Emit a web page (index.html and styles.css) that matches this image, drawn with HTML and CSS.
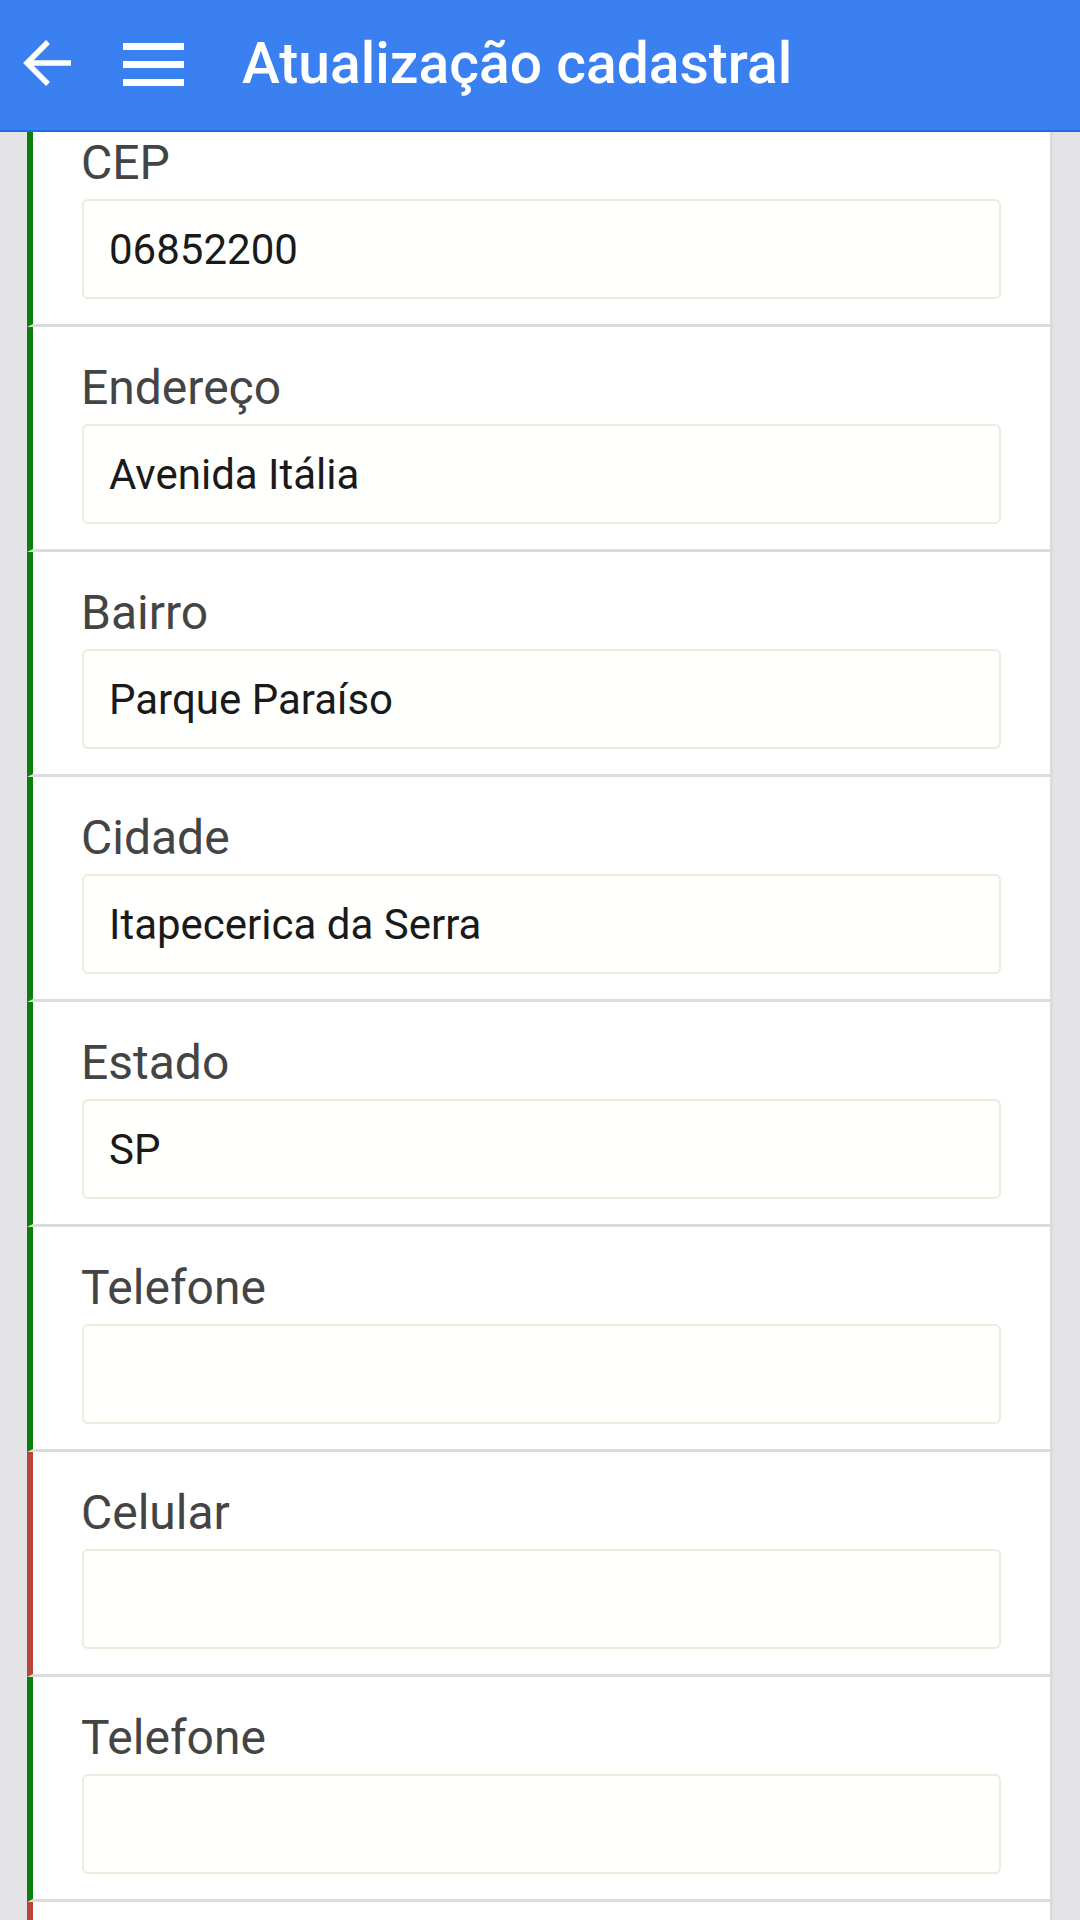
FILE: index.html
```html
<!DOCTYPE html>
<html>
    <head>
        <meta charset="UTF-8">
        <meta name="viewport" content="width=device-width, initial-scale=1.0"/>
        <title>Atualização cadastral</title>
        <link rel="stylesheet" href="styles.css">
    </head>
    <body>
        <header class="toolbar">
            <svg class="icon-back" width="50" height="50" viewBox="0 0 50 50">
                <path d="M48 24H4M25 3L4 24l21 21" fill="none" stroke="#fff" stroke-width="5.5"/>
            </svg>
            <svg class="icon-menu" width="61" height="43" viewBox="0 0 61 43">
                <rect x="0" y="0" width="61" height="7" fill="#fff"/>
                <rect x="0" y="18" width="61" height="7" fill="#fff"/>
                <rect x="0" y="36" width="61" height="7" fill="#fff"/>
            </svg>
            <h1 class="toolbar-title">Atualização cadastral</h1>
        </header>

        <form class="form-list">
            <div class="field ok">
                <label for="cep">CEP</label>
                <input id="cep" type="text" value="06852200">
            </div>
            <div class="field ok">
                <label for="endereco">Endereço</label>
                <input id="endereco" type="text" value="Avenida Itália">
            </div>
            <div class="field ok">
                <label for="bairro">Bairro</label>
                <input id="bairro" type="text" value="Parque Paraíso">
            </div>
            <div class="field ok">
                <label for="cidade">Cidade</label>
                <input id="cidade" type="text" value="Itapecerica da Serra">
            </div>
            <div class="field ok">
                <label for="estado">Estado</label>
                <input id="estado" type="text" value="SP">
            </div>
            <div class="field ok">
                <label for="telefone">Telefone</label>
                <input id="telefone" type="text" value="">
            </div>
            <div class="field error">
                <label for="celular">Celular</label>
                <input id="celular" type="text" value="">
            </div>
            <div class="field ok">
                <label for="telefone2">Telefone</label>
                <input id="telefone2" type="text" value="">
            </div>
            <!-- proxima linha, so aparece a borda -->
            <div class="field error">
                <input type="text" value="">
            </div>
        </form>
    </body>
</html>
```

FILE: styles.css
```css
*
{
    box-sizing: border-box;
}

body
{
    margin: 0;
    background: #e4e4e6;
    font-family: Roboto, "Liberation Sans", sans-serif;
}

/* barra superior fica por cima da lista rolada */
.toolbar
{
    position: fixed;
    top: 0;
    left: 0;
    right: 0;
    z-index: 2;
    display: flex;
    align-items: center;
    height: 132px;
    padding-left: 23px;
    background: #3a80f1;
    border-bottom: 2px solid #1c6de6;
}

.icon-back
{
    display: block;
    margin-top: -2px;
}

.icon-menu
{
    display: block;
    margin-left: 50px;
    margin-top: -2px;
}

.toolbar-title
{
    margin: -4px 0 0 58px;
    color: #fff;
    font-size: 57px;
    font-weight: 500;
    line-height: 1;
}

.form-list
{
    margin: 0 27px;
    padding-top: 102px;
}

.field
{
    display: flex;
    flex-direction: column;
    align-items: flex-start;
    padding: 33px 49px 25px 49px;
    background: #fff;
    border-left: 6px solid #0b7f0b;
    border-right: 3px solid #dcdcdc;
    border-bottom: 3px solid #dcdcdc;
}

.field.error
{
    border-left-color: #b9443a;
}

.field label
{
    display: block;
    margin-bottom: 8px;
    margin-left: -1px;
    color: #444;
    font-size: 48px;
    line-height: 56px;
}

.field input
{
    width: 919px;
    height: 100px;
    margin: 0;
    padding: 0 24px 0 25px;
    border: 2px solid #ecebdc;
    border-radius: 6px;
    background: #fffffd;
    color: #1a1a1a;
    font-family: Roboto, "Liberation Sans", sans-serif;
    font-size: 42px;
    outline: none;
}
```
